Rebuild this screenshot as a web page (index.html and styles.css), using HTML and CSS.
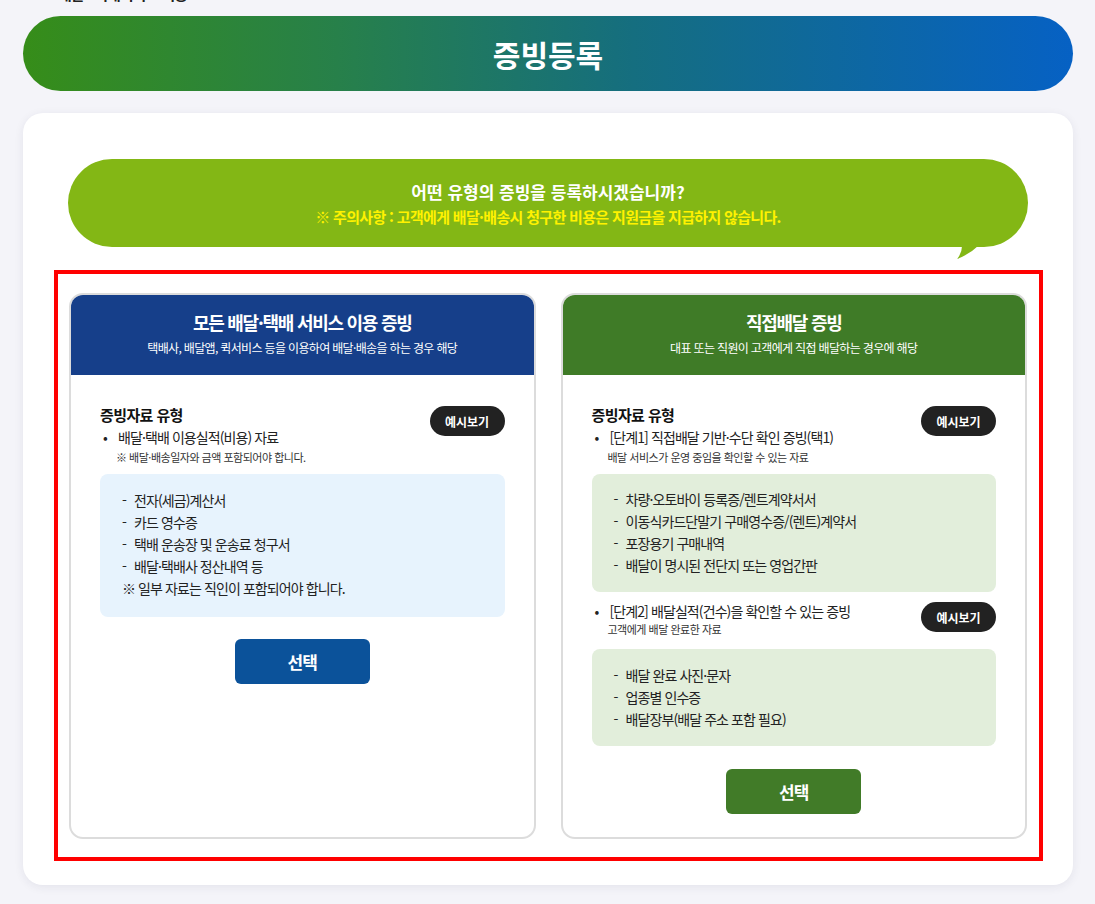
FILE: index.html
```html
<!DOCTYPE html>
<html lang="ko">
<head>
<meta charset="utf-8">
<title>증빙등록</title>
<link rel="stylesheet" href="styles.css">
</head>
<body>
<div class="topline">
  <span class="tl-dark">배달 · 택배서비스 이용</span>
  <span class="tl-blue">●</span>
  <span class="tl-orange">●</span>
</div>
<div class="page">
  <div class="titlebar">증빙등록</div>
  <div class="panel">
    <div class="bubble">
      <div class="bubble-q">어떤 유형의 증빙을 등록하시겠습니까?</div>
      <div class="bubble-warn">※ 주의사항 : 고객에게 배달·배송시 청구한 비용은 지원금을 지급하지 않습니다.</div>
      <svg class="bubble-tail" width="22" height="13" viewBox="0 0 22 13"><path d="M5 0 L21 0 Q13 8 0 13 Q5 7 5 0 Z" fill="#83b715"/></svg>
    </div>
    <div class="highlight">
      <div class="cards">
        <div class="card card-blue">
          <div class="card-head">
            <div class="card-title">모든 배달·택배 서비스 이용 증빙</div>
            <div class="card-sub">택배사, 배달앱, 퀵서비스 등을 이용하여 배달·배송을 하는 경우 해당</div>
          </div>
          <div class="card-body">
            <div class="row">
              <div class="row-text">
                <div class="sec-title">증빙자료 유형</div>
                <div class="bullet"><span class="dot">•</span><span>배달·택배 이용실적(비용) 자료</span></div>
                <div class="note">※ 배달·배송일자와 금액 포함되어야 합니다.</div>
              </div>
              <div class="pill">예시보기</div>
            </div>
            <div class="box box-blue">
              <div class="item"><span class="dash">-</span>전자(세금)계산서</div>
              <div class="item"><span class="dash">-</span>카드 영수증</div>
              <div class="item"><span class="dash">-</span>택배 운송장 및 운송료 청구서</div>
              <div class="item"><span class="dash">-</span>배달·택배사 정산내역 등</div>
              <div class="item">※ 일부 자료는 직인이 포함되어야 합니다.</div>
            </div>
            <div class="btn-wrap"><div class="btn btn-blue">선택</div></div>
          </div>
        </div>
        <div class="card card-green">
          <div class="card-head">
            <div class="card-title">직접배달 증빙</div>
            <div class="card-sub">대표 또는 직원이 고객에게 직접 배달하는 경우에 해당</div>
          </div>
          <div class="card-body">
            <div class="row">
              <div class="row-text">
                <div class="sec-title">증빙자료 유형</div>
                <div class="bullet"><span class="dot">•</span><span>[단계1] 직접배달 기반·수단 확인 증빙(택1)</span></div>
                <div class="note">배달 서비스가 운영 중임을 확인할 수 있는 자료</div>
              </div>
              <div class="pill">예시보기</div>
            </div>
            <div class="box box-green">
              <div class="item"><span class="dash">-</span>차량·오토바이 등록증/렌트계약서서</div>
              <div class="item"><span class="dash">-</span>이동식카드단말기 구매영수증/(렌트)계약서</div>
              <div class="item"><span class="dash">-</span>포장용기 구매내역</div>
              <div class="item"><span class="dash">-</span>배달이 명시된 전단지 또는 영업간판</div>
            </div>
            <div class="row row-step2">
              <div class="row-text">
                <div class="bullet"><span class="dot">•</span><span>[단계2] 배달실적(건수)을 확인할 수 있는 증빙</span></div>
                <div class="note">고객에게 배달 완료한 자료</div>
              </div>
              <div class="pill">예시보기</div>
            </div>
            <div class="box box-green box-step2">
              <div class="item"><span class="dash">-</span>배달 완료 사진·문자</div>
              <div class="item"><span class="dash">-</span>업종별 인수증</div>
              <div class="item"><span class="dash">-</span>배달장부(배달 주소 포함 필요)</div>
            </div>
            <div class="btn-wrap btn-wrap-green"><div class="btn btn-green">선택</div></div>
          </div>
        </div>
      </div>
    </div>
  </div>
</div>
</body>
</html>
```

FILE: styles.css
```css
* { box-sizing: border-box; }
html, body {
  margin: 0;
  padding: 0;
  background: #f4f4f9;
  font-family: "Noto Sans CJK KR", "Noto Sans", sans-serif;
  color: #222;
  letter-spacing: -0.06em;
}
.topline {
  height: 3px;
  overflow: hidden;
  display: flex;
  align-items: flex-end;
  padding-left: 58px;
  font-size: 15px;
  line-height: 18px;
}
.tl-dark { color: #222; font-weight: 700; }
.tl-blue { color: #2a6fb5; margin-left: 20px; font-size: 8px; }
.tl-orange { color: #f08a24; margin-left: 240px; font-size: 8px; }

.page {
  padding: 13px 22px 20px 23px;
}
.titlebar {
  height: 75px;
  border-radius: 38px;
  background: linear-gradient(90deg, #368d19 0%, #27804a 30%, #156e7f 58%, #0661c4 100%);
  color: #fff;
  font-size: 30px;
  font-weight: 700;
  display: flex;
  align-items: center;
  justify-content: center;
  letter-spacing: 0;
}
.panel {
  margin-top: 22px;
  background: #fff;
  border-radius: 20px;
  box-shadow: 0 2px 10px rgba(40, 40, 80, 0.08);
  padding: 46px 30px 24px 31px;
}
.bubble {
  position: relative;
  margin: 0 15px 23px 14px;
  height: 88px;
  border-radius: 44px;
  background: #83b715;
  display: flex;
  flex-direction: column;
  align-items: center;
  justify-content: center;
  text-align: center;
}
.bubble-q {
  color: #fff;
  font-size: 17px;
  font-weight: 700;
  line-height: 24px;
  letter-spacing: 0;
}
.bubble-warn {
  color: #fff200;
  font-size: 15px;
  font-weight: 700;
  line-height: 20px;
  margin-top: 3px;
  letter-spacing: -0.045em;
}
.bubble-tail {
  position: absolute;
  left: 889px;
  top: 87px;
}
.highlight {
  border: 4px solid #ff0000;
  padding: 19px 12px 18px 11px;
}
.cards {
  display: grid;
  grid-template-columns: 1fr 1fr;
  column-gap: 25px;
}
.card {
  border: 2px solid #dcdcdc;
  border-radius: 14px;
  overflow: hidden;
  background: #fff;
}
.card-head {
  padding: 15px 10px 19px;
  text-align: center;
  color: #fff;
}
.card-blue .card-head { background: #163f8a; }
.card-green .card-head { background: #3f7b27; }
.card-title {
  font-size: 18px;
  font-weight: 700;
  line-height: 24px;
  letter-spacing: -0.07em;
}
.card-sub {
  font-size: 12px;
  line-height: 16px;
  margin-top: 6px;
  letter-spacing: -0.055em;
}
.card-body {
  padding: 30px 29px 23px;
}
.row {
  display: flex;
  justify-content: space-between;
  align-items: flex-start;
}
.row-text { display: flex; flex-direction: column; }
.sec-title {
  font-size: 15px;
  font-weight: 700;
  line-height: 20px;
  color: #111;
  letter-spacing: -0.04em;
}
.bullet {
  display: flex;
  font-size: 14px;
  line-height: 20px;
  margin-top: 2px;
  color: #222;
  letter-spacing: -0.065em;
}
.row-step2 .bullet { margin-top: 0; }
.dot {
  width: 15px;
  margin-left: 3px;
  flex: none;
}
.note {
  font-size: 11px;
  line-height: 16px;
  margin-top: 2px;
  padding-left: 16px;
  color: #333;
  letter-spacing: -0.045em;
}
.row-step2 .note { margin-top: 0; }
.pill {
  width: 75px;
  height: 30px;
  border-radius: 15px;
  background: #222;
  color: #fff;
  font-size: 12px;
  font-weight: 700;
  display: flex;
  align-items: center;
  justify-content: center;
  margin-top: 1px;
  flex: none;
  letter-spacing: 0;
}
.box {
  margin-top: 9px;
  border-radius: 8px;
  padding: 15px 22px 18px;
}
.box-blue { background: #e7f3fd; }
.box-green { background: #e2eedb; padding: 14px 22px 16px; }
.box-step2 { margin-top: 12px; padding: 15px 22px 16px; }
.row-step2 { margin-top: 9px; }
.item {
  font-size: 14px;
  line-height: 22px;
  color: #222;
  letter-spacing: -0.065em;
}
.dash {
  display: inline-block;
  width: 12px;
}
.btn-wrap {
  display: flex;
  justify-content: center;
  margin-top: 22px;
}
.btn-wrap-green { margin-top: 23px; }
.btn {
  width: 135px;
  height: 45px;
  border-radius: 6px;
  color: #fff;
  font-size: 17px;
  font-weight: 700;
  display: flex;
  align-items: center;
  justify-content: center;
}
.btn-blue { background: #0b529a; }
.btn-green { background: #417b28; }
```
